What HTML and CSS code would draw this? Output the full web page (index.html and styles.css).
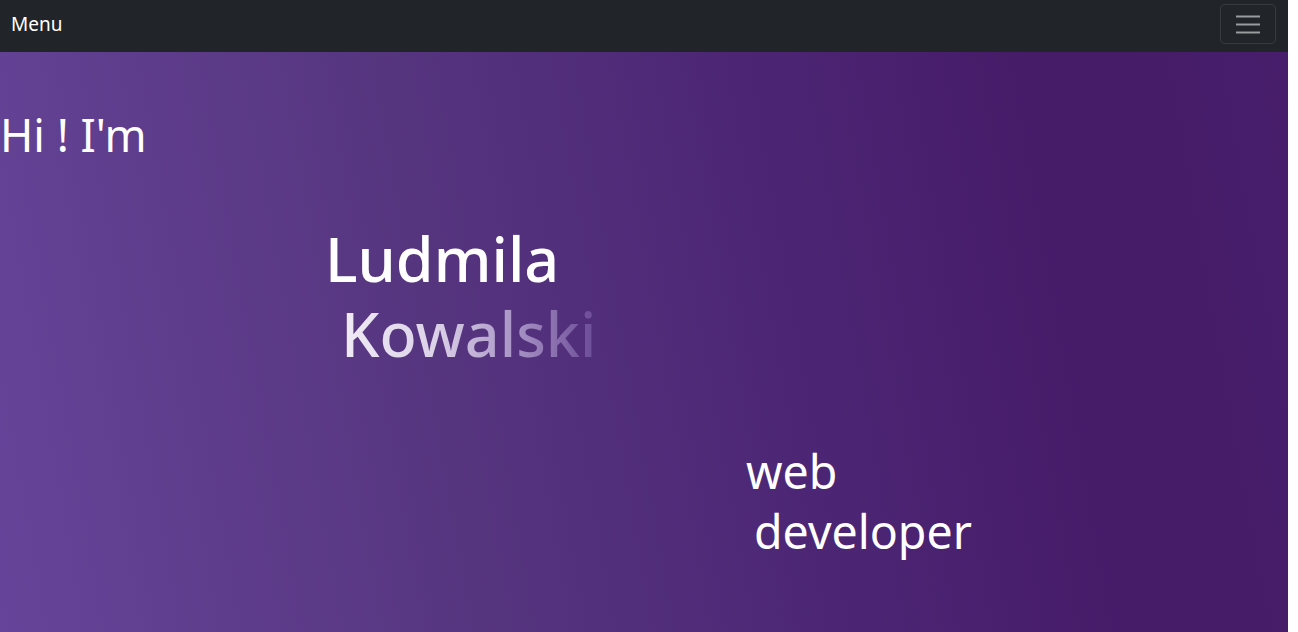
FILE: index.html
```html
<!DOCTYPE html>
<html lang="en">
<head>
<meta charset="utf-8">
<title>Ludmila Kowalski</title>
<link rel="stylesheet" href="styles.css">
</head>
<body>
<div class="page">
  <nav class="navbar">
    <span class="brand">Menu</span>
    <button class="toggler" type="button" aria-label="Toggle navigation">
      <svg width="30" height="30" viewBox="0 0 30 30" aria-hidden="true">
        <path d="M3 7.5h24M3 15.5h24M3 23.5h24" stroke="rgba(255,255,255,0.55)" stroke-width="2" stroke-linecap="butt" fill="none"/>
      </svg>
    </button>
  </nav>
  <header class="hero">
    <div class="greeting">Hi ! I'm</div>
    <div class="name">
      <span class="first">Ludmila</span>
      <span class="last">Kowalski</span>
    </div>
    <div class="job">
      <span class="job-a">web</span>
      <span class="job-b">developer</span>
    </div>
  </header>
</div>
</body>
</html>
```

FILE: styles.css
```css
* { box-sizing: border-box; }
html, body { margin: 0; padding: 0; background: #ffffff; }
body { font-family: "Noto Sans", "Open Sans", sans-serif; overflow: hidden; }

.page { width: 1288px; }

.navbar {
  height: 52px;
  background: #212529;
  display: flex;
  align-items: center;
  justify-content: space-between;
  padding: 0 12px 0 11px;
}
.brand {
  color: #ffffff;
  font-size: 19px;
  line-height: 1;
  margin-top: -4px;
}
.toggler {
  width: 56px;
  height: 40px;
  margin-top: -4px;
  background: transparent;
  border: 1px solid rgba(255,255,255,0.1);
  border-radius: 5px;
  display: flex;
  align-items: center;
  justify-content: center;
  padding: 0;
}
.toggler svg { display: block; }

.hero {
  height: 580px;
  background: linear-gradient(80deg, #664499 0%, #56357f 35%, #4c2675 60%, #461b68 82%, #471e6b 100%);
  color: #ffffff;
  display: grid;
  grid-template-columns: 327px 419px 1fr;
  grid-template-rows: auto auto auto;
  align-content: start;
  padding-top: 53px;
}
.greeting {
  grid-column: 1;
  grid-row: 1;
  font-size: 45px;
  line-height: 60px;
  white-space: nowrap;
}
.name {
  grid-column: 2;
  grid-row: 2;
  margin-top: 56px;
  font-size: 61px;
  line-height: 75px;
  font-weight: 500;
  display: flex;
  flex-direction: column;
  align-items: flex-start;
}
.name .first { margin-left: -2px; }
.name .last {
  padding-left: 14px;
  background: linear-gradient(90deg, #f3eff8 0%, #dcd2e8 40%, #a894c6 70%, #6a4a96 100%);
  -webkit-background-clip: text;
  background-clip: text;
  color: transparent;
}
.job {
  grid-column: 3;
  grid-row: 3;
  margin-top: 70px;
  font-size: 46.5px;
  line-height: 60px;
  display: flex;
  flex-direction: column;
  align-items: flex-start;
}
.job .job-b { padding-left: 8px; }
```
